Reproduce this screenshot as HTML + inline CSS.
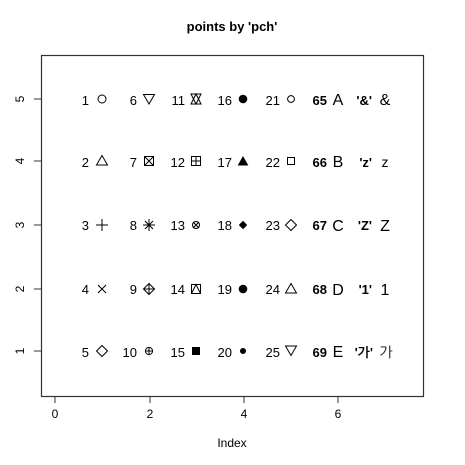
<!DOCTYPE html>
<html><head><meta charset="utf-8"><style>
html,body{margin:0;padding:0;background:#fff}
svg{display:block}
text{font-family:"Liberation Sans","NanumGothic","Noto Sans CJK KR",sans-serif;fill:#000}
</style></head><body>
<svg width="465" height="465" viewBox="0 0 465 465" xmlns="http://www.w3.org/2000/svg">
<text x="232" y="31" font-size="13" font-weight="bold" text-anchor="middle">points by 'pch'</text>
<rect x="41.5" y="55.5" width="382" height="341" fill="none" stroke="#333" stroke-width="1.2"/>
<g stroke="#333" stroke-width="1">
<line x1="55" y1="396" x2="55" y2="403"/><line x1="150" y1="396" x2="150" y2="403"/><line x1="244" y1="396" x2="244" y2="403"/><line x1="338" y1="396" x2="338" y2="403"/>
<line x1="34" y1="99" x2="41" y2="99"/><line x1="34" y1="161" x2="41" y2="161"/><line x1="34" y1="225" x2="41" y2="225"/><line x1="34" y1="289" x2="41" y2="289"/><line x1="34" y1="351" x2="41" y2="351"/>
</g>
<g font-size="12" text-anchor="middle">
<text x="55" y="418">0</text><text x="150" y="418">2</text><text x="244" y="418">4</text><text x="338" y="418">6</text>
<text transform="translate(24,99) rotate(-90)">5</text>
<text transform="translate(24,161) rotate(-90)">4</text>
<text transform="translate(24,225) rotate(-90)">3</text>
<text transform="translate(24,289) rotate(-90)">2</text>
<text transform="translate(24,351) rotate(-90)">1</text>
<text x="232" y="447">Index</text>
</g>
<g font-size="13" text-anchor="end">
<text x="89" y="105">1</text><text x="89" y="167">2</text><text x="89" y="230">3</text><text x="89" y="294">4</text><text x="89" y="357">5</text>
<text x="137" y="105">6</text><text x="137" y="167">7</text><text x="137" y="230">8</text><text x="137" y="294">9</text><text x="137" y="357">10</text>
<text x="185" y="105">11</text><text x="185" y="167">12</text><text x="185" y="230">13</text><text x="185" y="294">14</text><text x="185" y="357">15</text>
<text x="232" y="105">16</text><text x="232" y="167">17</text><text x="232" y="230">18</text><text x="232" y="294">19</text><text x="232" y="357">20</text>
<text x="280" y="105">21</text><text x="280" y="167">22</text><text x="280" y="230">23</text><text x="280" y="294">24</text><text x="280" y="357">25</text>
</g>
<g font-size="13" font-weight="bold" text-anchor="end">
<text x="327" y="105">65</text><text x="327" y="167">66</text><text x="327" y="230">67</text><text x="327" y="294">68</text><text x="327" y="357">69</text>
<text x="372" y="105">'&amp;'</text><text x="372" y="167">'z'</text><text x="372" y="230">'Z'</text><text x="372" y="294">'1'</text><text x="373" y="357">'가'</text>
</g>
<g font-size="16" text-anchor="middle">
<text x="338" y="105">A</text><text x="338" y="167">B</text><text x="338" y="231">C</text><text x="338" y="295">D</text><text x="338" y="357">E</text>
<text x="385" y="105">&amp;</text><text x="385" y="167" font-size="14">z</text><text x="385" y="231">Z</text><text x="385" y="295">1</text><text x="386" y="357" font-size="14">가</text>
</g>
<g fill="none" stroke="#000" stroke-width="1">
<circle cx="102" cy="99" r="4"/>
<path d="M102,155.5 L107.5,165 L96.5,165 Z"/>
<path d="M96,225 H108 M102,219 V231"/>
<path d="M98,285 L106,293 M106,285 L98,293"/>
<path d="M102,345.5 L107.5,351 L102,356.5 L96.5,351 Z"/>
<path d="M143.5,94.5 H154.5 L149,104 Z"/>
<rect x="144.5" y="156.5" width="9" height="9"/><path d="M144.5,156.5 L153.5,165.5 M153.5,156.5 L144.5,165.5"/>
<path d="M143,225 H155 M149,219 V231 M145,221 L153,229 M153,221 L145,229"/>
<path d="M149,283.5 L154.5,289 L149,294.5 L143.5,289 Z M143.5,289 H154.5 M149,283.5 V294.5"/>
<circle cx="149" cy="351" r="3.6"/><path d="M145.4,351 H152.6 M149,347.4 V354.6"/>
<path d="M191,94 H201 L196,104 Z M191,104 H201 L196,94 Z"/>
<rect x="191.5" y="156.5" width="9" height="9"/><path d="M191.5,161 H200.5 M196,156.5 V165.5"/>
<circle cx="196" cy="225" r="3.5"/><path d="M193,222 L199,228 M199,222 L193,228"/>
<rect x="191.5" y="284.5" width="9" height="9"/><path d="M191.5,293.5 L196,284.5 L200.5,293.5"/>
<rect x="192.5" y="347.5" width="7" height="7" fill="#000"/>
<circle cx="243" cy="99" r="3.8" fill="#000"/>
<path d="M243,157 L247.5,165 L238.5,165 Z" fill="#000"/>
<path d="M243,221.5 L246.5,225 L243,228.5 L239.5,225 Z" fill="#000"/>
<circle cx="243" cy="289" r="3.8" fill="#000"/>
<circle cx="243" cy="351" r="2.5" fill="#000"/>
<circle cx="291" cy="99" r="3.4"/>
<rect x="287.5" y="157.5" width="7" height="7"/>
<path d="M291,219.5 L296.5,225 L291,230.5 L285.5,225 Z"/>
<path d="M291,283.5 L296.5,293 L285.5,293 Z"/>
<path d="M285.5,346 H296.5 L291,355.5 Z"/>
</g>
</svg>
</body></html>
